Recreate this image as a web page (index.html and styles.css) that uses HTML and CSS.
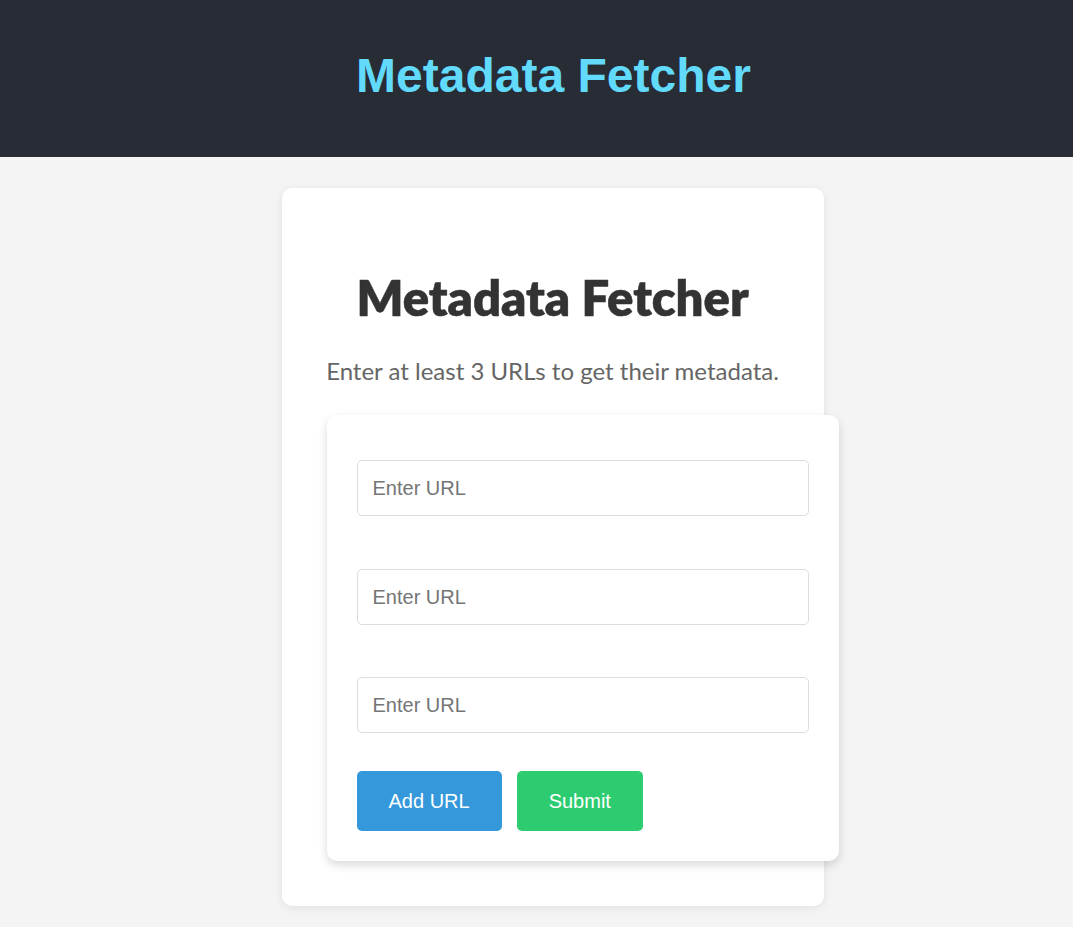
FILE: index.html
```html
<!DOCTYPE html>
<html lang="en">
<head>
<meta charset="utf-8">
<title>Metadata Fetcher</title>
<link rel="stylesheet" href="styles.css">
</head>
<body>
<header class="app-header">
  <h1 class="app-title">Metadata Fetcher</h1>
</header>
<main class="main">
  <section class="card">
    <h2 class="card-title">Metadata Fetcher</h2>
    <p class="card-sub">Enter at least 3 URLs to get their metadata.</p>
    <form class="url-form" onsubmit="return false;">
      <div class="field"><input class="url-input" type="text" placeholder="Enter URL"></div>
      <div class="field"><input class="url-input" type="text" placeholder="Enter URL"></div>
      <div class="field field-last"><input class="url-input" type="text" placeholder="Enter URL"></div>
      <div class="actions">
        <button type="button" class="btn btn-add">Add URL</button>
        <button type="submit" class="btn btn-submit">Submit</button>
      </div>
    </form>
  </section>
</main>
</body>
</html>
```
FILE: styles.css
```css
* { box-sizing: border-box; }
html, body { margin: 0; padding: 0; }
body {
  background: #f4f4f4;
  font-family: "Liberation Sans", Arial, sans-serif;
  min-height: 927px;
}
.app-header {
  background: #282c34;
  height: 157px;
  display: flex;
  align-items: center;
  justify-content: center;
  padding: 0 0 6px 34px;
}
.app-title {
  margin: 0;
  font-family: "Liberation Sans", Arial, sans-serif;
  font-size: 48px;
  font-weight: bold;
  color: #61dafb;
  line-height: 1.15;
}
.main {
  display: flex;
  justify-content: center;
  padding: 31px 0 0 32px;
}
.card {
  width: 542px;
  background: #fff;
  border-radius: 10px;
  padding: 45px 45px 45px;
  box-shadow: 0 2px 10px rgba(0,0,0,0.08);
  text-align: center;
}
.card-title {
  margin: 34px 0 0;
  font-family: Lato, "Open Sans", sans-serif;
  font-size: 49px;
  font-weight: 800;
  color: #333;
  line-height: 60px;
  -webkit-text-stroke: 0.5px #333;
}
.card-sub {
  margin: 29px -10px 0;
  font-family: Lato, "Open Sans", sans-serif;
  font-size: 24px;
  color: #666;
  line-height: 30px;
  white-space: nowrap;
}
.url-form {
  width: 512px;
  margin-top: 29px;
  background: #fff;
  border-radius: 10px;
  padding: 30px;
  box-shadow: 0 4px 10px rgba(0,0,0,0.15);
  text-align: left;
}
.field { margin-top: 15px; }
.field + .field { margin-top: 53px; }
.field + .field-last { margin-top: 52px; }
.url-input {
  display: block;
  width: 100%;
  height: 56px;
  padding: 0 15px;
  border: 1px solid #ddd;
  border-radius: 5px;
  font-family: "Liberation Sans", Arial, sans-serif;
  font-size: 20px;
  color: #333;
  background: #fff;
}
.url-input::placeholder { color: #757575; }
.actions {
  display: flex;
  gap: 15px;
  margin-top: 38px;
}
.btn {
  height: 60px;
  padding: 0 32px;
  border: none;
  border-radius: 5px;
  color: #fff;
  font-family: "Liberation Sans", Arial, sans-serif;
  font-size: 20px;
  cursor: pointer;
}
.btn-add { background: #3498db; }
.btn-submit { background: #2ecc71; }
```
